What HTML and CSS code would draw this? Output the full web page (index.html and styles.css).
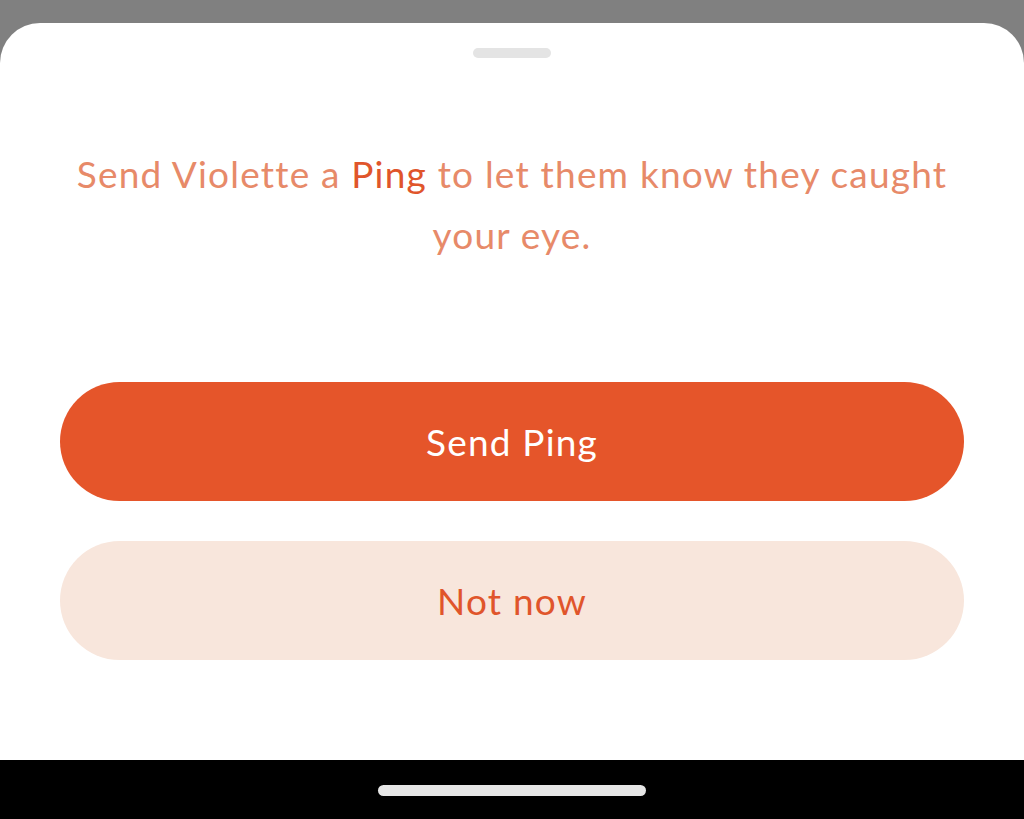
FILE: index.html
```html
<!DOCTYPE html>
<html>
<head>
<meta charset="utf-8">
<link rel="stylesheet" href="styles.css">
</head>
<body>
<div class="screen">
  <div class="sheet">
    <div class="grabber"></div>
    <p class="message">Send Violette a <span class="accent">Ping</span> to let them know they caught your eye.</p>
    <div class="actions">
      <button class="btn btn-primary">Send Ping</button>
      <button class="btn btn-secondary">Not now</button>
    </div>
  </div>
  <div class="homebar"><div class="indicator"></div></div>
</div>
</body>
</html>
```
FILE: styles.css
```css
html, body {
  margin: 0;
  padding: 0;
  background: #808080;
}
.screen {
  width: 1024px;
  height: 819px;
  display: flex;
  flex-direction: column;
  font-family: Lato, "Open Sans", sans-serif;
}
.sheet {
  margin-top: 23px;
  flex: 1;
  background: #ffffff;
  border-radius: 40px 40px 0 0;
  display: flex;
  flex-direction: column;
  align-items: center;
}
.grabber {
  margin-top: 25px;
  width: 78px;
  height: 10px;
  border-radius: 5px;
  background: #e4e4e4;
}
.message {
  margin: 85px 60px 0;
  text-align: center;
  font-size: 37px;
  line-height: 61px;
  letter-spacing: 1.2px;
  color: #e78a69;
}
.accent {
  color: #e0552b;
}
.actions {
  align-self: stretch;
  margin: 117px 60px 0;
  display: flex;
  flex-direction: column;
  gap: 40px;
}
.btn {
  height: 119px;
  border: none;
  border-radius: 60px;
  font-family: inherit;
  font-size: 37px;
  letter-spacing: 1.2px;
}
.btn-primary {
  background: #e5552a;
  color: #ffffff;
}
.btn-secondary {
  background: #f8e6dc;
  color: #e0552b;
}
.homebar {
  height: 59px;
  background: #000;
  display: flex;
  justify-content: center;
  padding-top: 25px;
  box-sizing: border-box;
}
.indicator {
  width: 268px;
  height: 11px;
  border-radius: 6px;
  background: #e6e6e6;
}
```
